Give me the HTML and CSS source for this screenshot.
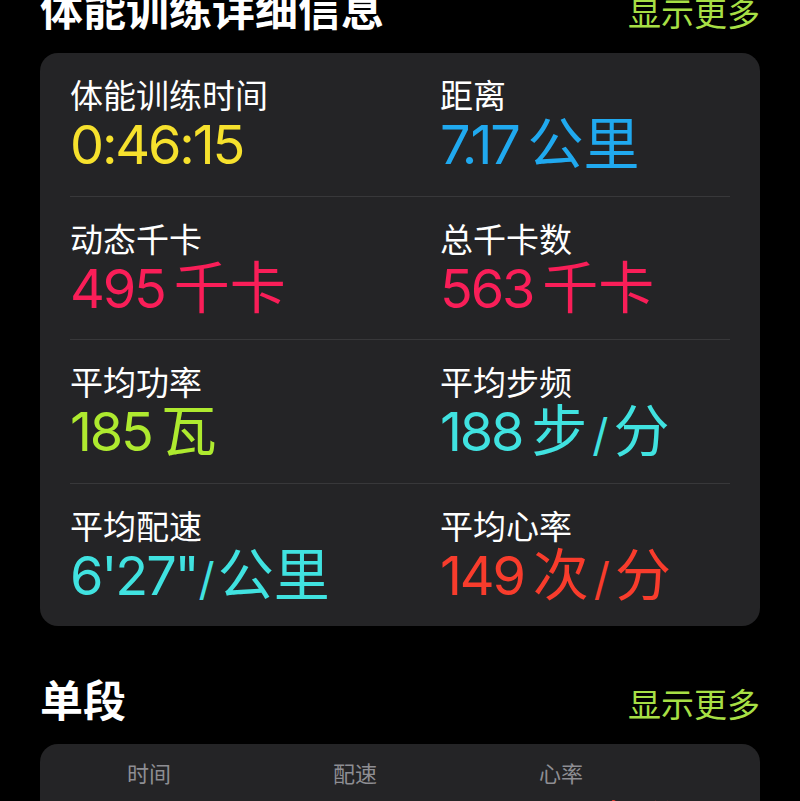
FILE: index.html
```html
<!DOCTYPE html>
<html lang="zh-CN">
<head>
<meta charset="utf-8">
<title>体能训练详细信息</title>
<link rel="stylesheet" href="styles.css">
</head>
<body>
<div class="page">
  <section class="section">
    <div class="sec-head">
      <h2 class="sec-title">体能训练详细信息</h2>
      <span class="more">显示更多</span>
    </div>
    <div class="card metrics">
      <div class="row">
        <div class="cell">
          <div class="label">体能训练时间</div>
          <div class="value yellow"><span class="num">0:46:15</span></div>
        </div>
        <div class="cell">
          <div class="label">距离</div>
          <div class="value blue"><span class="num">7.17</span><span class="unit">公里</span></div>
        </div>
      </div>
      <div class="row">
        <div class="cell">
          <div class="label">动态千卡</div>
          <div class="value pink"><span class="num">495</span><span class="unit">千卡</span></div>
        </div>
        <div class="cell">
          <div class="label">总千卡数</div>
          <div class="value pink"><span class="num">563</span><span class="unit">千卡</span></div>
        </div>
      </div>
      <div class="row">
        <div class="cell">
          <div class="label">平均功率</div>
          <div class="value green"><span class="num">185</span><span class="unit">瓦</span></div>
        </div>
        <div class="cell">
          <div class="label">平均步频</div>
          <div class="value cyan"><span class="num">188</span><span class="unit">步</span><span class="sep">/</span><span class="unit-r">分</span></div>
        </div>
      </div>
      <div class="row">
        <div class="cell">
          <div class="label">平均配速</div>
          <div class="value cyan"><span class="num">6'27"</span><span class="sep sep-tight">/</span><span class="unit-r">公里</span></div>
        </div>
        <div class="cell">
          <div class="label">平均心率</div>
          <div class="value red"><span class="num">149</span><span class="unit">次</span><span class="sep">/</span><span class="unit-r">分</span></div>
        </div>
      </div>
    </div>
  </section>

  <section class="section splits">
    <div class="sec-head">
      <h2 class="sec-title">单段</h2>
      <span class="more">显示更多</span>
    </div>
    <div class="card splits-card">
      <div class="split-head">
        <span>时间</span>
        <span>配速</span>
        <span>心率</span>
      </div>
      <div class="split-row">
        <span class="s-val">6:21.04</span>
        <span class="s-val cyan">6'21"</span>
        <span class="s-val red">142次/分</span>
      </div>
    </div>
  </section>
</div>
</body>
</html>
```

FILE: styles.css
```css
html, body {
  height: 100%;
  overflow: hidden;
}

body {
  margin: 0;
  background: #000;
  color: #fff;
  font-family: "Noto Sans CJK SC", sans-serif;
}

.page {
  padding: 0 40px;
  margin-top: -19px;
}

.sec-head {
  display: flex;
  justify-content: space-between;
  align-items: baseline;
  height: 52px;
  margin-bottom: 20px;
}

.sec-title {
  margin: 0;
  font-size: 43px;
  font-weight: 700;
  line-height: 52px;
}

.more {
  font-size: 33px;
  line-height: 40px;
  color: #a7df45;
}

.card {
  background: #242426;
  border-radius: 18px;
}

.metrics {
  padding: 0 30px;
}

.row {
  display: grid;
  grid-template-columns: 370px 1fr;
  padding: 21px 0 21.5px;
  border-bottom: 1px solid #38383a;
}

.row:last-child {
  border-bottom: none;
}

.label {
  font-size: 33px;
  line-height: 40px;
  color: #fff;
}

.value {
  font-family: Inter, "Noto Sans CJK SC", sans-serif;
  font-size: 56px;
  line-height: 60px;
  height: 60px;
  white-space: nowrap;
}

.num {
  font-size: 54px;
  line-height: 1;
  letter-spacing: -0.04em;
}

.unit {
  margin-left: 9px;
}

.sep {
  font-size: 0.8em;
  line-height: 1;
  margin: 0 5px;
}

.sep-tight {
  margin: 0 3px 0 1px;
}

.yellow { color: #f6e12d; }
.blue { color: #20a9ef; }
.pink { color: #f91e58; }
.green { color: #aeea2f; }
.cyan { color: #40e2e0; }
.red { color: #f83c2c; }

.splits {
  margin-top: 46px;
}

.splits-card {
  padding: 14px 0 0 6px;
  height: 200px;
}

.split-head,
.split-row {
  display: grid;
  grid-template-columns: repeat(3, 206px);
}

.split-head {
  font-size: 22px;
  line-height: 28px;
  color: #8e8e93;
  text-align: center;
}

.split-row {
  margin-top: 10px;
  font-family: Inter, "Noto Sans CJK SC", sans-serif;
  font-size: 36px;
  line-height: 44px;
  white-space: nowrap;
}

.s-val {
  padding-left: 80px;
  letter-spacing: -0.02em;
}
```
